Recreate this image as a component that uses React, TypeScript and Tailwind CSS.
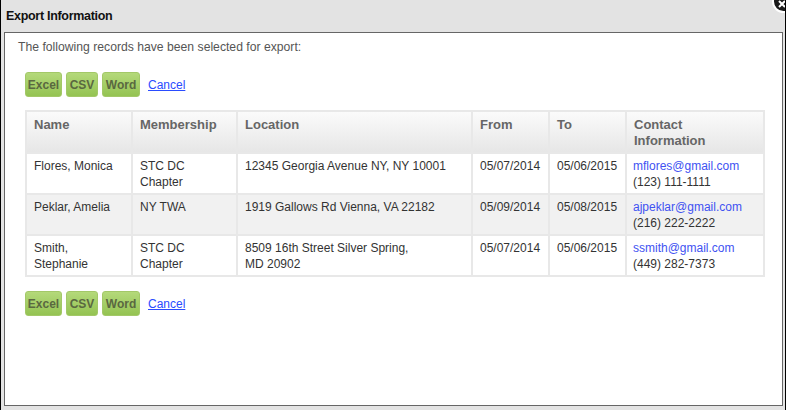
import React from "react";

const rows = [
  {
    name: "Flores, Monica",
    membership: "STC DC Chapter",
    location: ["12345 Georgia Avenue NY, NY 10001"],
    from: "05/07/2014",
    to: "05/06/2015",
    email: "mflores@gmail.com",
    phone: "(123) 111-1111",
  },
  {
    name: "Peklar, Amelia",
    membership: "NY TWA",
    location: ["1919 Gallows Rd Vienna, VA 22182"],
    from: "05/09/2014",
    to: "05/08/2015",
    email: "ajpeklar@gmail.com",
    phone: "(216) 222-2222",
  },
  {
    name: "Smith, Stephanie",
    membership: "STC DC Chapter",
    location: ["8509 16th Street Silver Spring,", "MD 20902"],
    from: "05/07/2014",
    to: "05/06/2015",
    email: "ssmith@gmail.com",
    phone: "(449) 282-7373",
  },
];

function Buttons() {
  const btn =
    "h-[25px] flex items-center justify-center rounded-[3px] border border-[#a3c868] bg-gradient-to-b from-[#b4d97a] to-[#94c352] text-[12px] font-bold text-[#5a6840]";
  return (
    <div className="flex items-center">
      <div className={`${btn} w-[37px]`}>Excel</div>
      <div className={`${btn} w-[32px] ml-[4px]`}>CSV</div>
      <div className={`${btn} w-[38px] ml-[4px]`}>Word</div>
      <a className="ml-[8px] text-[12px] text-[#2a4cff] underline" href="#">
        Cancel
      </a>
    </div>
  );
}

export default function App() {
  return (
    <div
      className="relative w-[786px] h-[410px] overflow-hidden bg-[#e3e3e3] border-l border-r border-black flex flex-col"
      style={{ fontFamily: '"Liberation Sans", Arial, sans-serif' }}
    >
      <div className="h-[32px] flex items-center pl-[5px] text-[12.5px] font-bold text-[#111] tracking-[-0.3px] shrink-0">
        Export Information
      </div>
      <div className="absolute right-[-10px] top-[-10px] w-[23px] h-[23px] rounded-full bg-[#1a1a1a] border-2 border-white flex items-center justify-center">
        <svg width="12" height="12" viewBox="0 0 12 12" className="mt-[4px] mr-[4px]">
          <path d="M3 3 L9 9 M9 3 L3 9" stroke="white" strokeWidth="2" />
        </svg>
      </div>
      <div className="ml-[3px] mr-[2px] h-[374px] bg-white border border-[#666] flex flex-col">
        <div className="pt-[7px] pl-[13px] text-[12.2px] text-[#555] leading-[15px]">
          The following records have been selected for export:
        </div>
        <div className="pl-[20px] mt-[17px]">
          <Buttons />
        </div>
        <div className="pl-[20px] mt-[13px]">
          <table className="w-[738px] border-collapse border-2 border-[#e2e2e2] text-[12px] leading-[16px] text-[#333] table-fixed">
            <colgroup>
              <col className="w-[106px]" />
              <col className="w-[105px]" />
              <col className="w-[235px]" />
              <col className="w-[77px]" />
              <col className="w-[77px]" />
              <col className="w-[138px]" />
            </colgroup>
            <thead>
              <tr className="h-[42px] bg-gradient-to-b from-[#fbfbfb] to-[#e6e6e6]">
                {["Name", "Membership", "Location", "From", "To", "Contact Information"].map((h) => (
                  <th
                    key={h}
                    className="border-2 border-[#e8e8e8] text-left align-top pt-[5px] pl-[7px] pr-[6px] text-[13px] font-bold text-[#666] leading-[16px]"
                  >
                    {h}
                  </th>
                ))}
              </tr>
            </thead>
            <tbody>
              {rows.map((r, i) => (
                <tr key={i} className={`h-[41px] ${i === 1 ? "bg-[#f1f1f1]" : "bg-white"}`}>
                  <td className="border-2 border-[#e8e8e8] align-top pt-[4px] pl-[7px] pr-[14px]">{r.name}</td>
                  <td className="border-2 border-[#e8e8e8] align-top pt-[4px] pl-[7px] pr-[10px]">{r.membership}</td>
                  <td className="border-2 border-[#e8e8e8] align-top pt-[4px] pl-[7px] pr-[6px]">
                    {r.location.map((l) => (
                      <div key={l}>{l}</div>
                    ))}
                  </td>
                  <td className="border-2 border-[#e8e8e8] align-top pt-[4px] pl-[7px]">{r.from}</td>
                  <td className="border-2 border-[#e8e8e8] align-top pt-[4px] pl-[7px]">{r.to}</td>
                  <td className="border-2 border-[#e8e8e8] align-top pt-[4px] pl-[6px]">
                    <div className="text-[#4152f2]">{r.email}</div>
                    <div>{r.phone}</div>
                  </td>
                </tr>
              ))}
            </tbody>
          </table>
        </div>
        <div className="pl-[20px] mt-[14px]">
          <Buttons />
        </div>
      </div>
    </div>
  );
}
